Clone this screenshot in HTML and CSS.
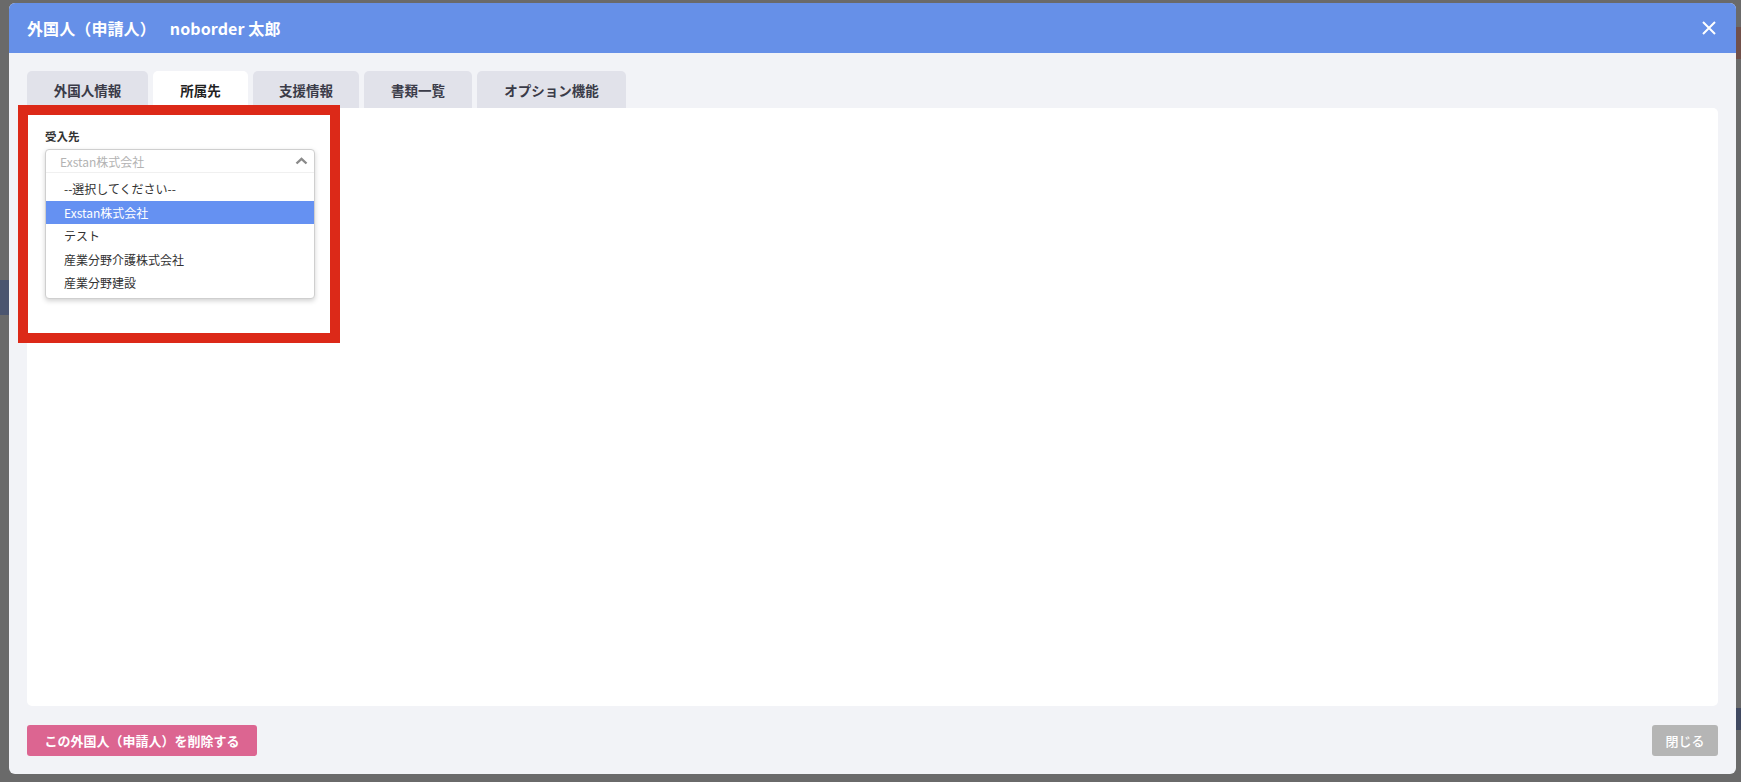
FILE: index.html
```html
<!DOCTYPE html>
<html lang="ja">
<head>
    <meta charset="UTF-8">
    <meta name="viewport" content="width=device-width, initial-scale=1.0">
    <title>外国人（申請人）</title>
    <link rel="stylesheet" href="styles.css">
</head>
<body>
    <div class="backdrop">
        <div class="side-mark side-left"></div>
        <div class="side-mark side-right-top"></div>
        <div class="side-mark side-right-bottom"></div>
    </div>

    <div class="modal">
        <div class="modal-header">
            <h2 class="modal-title">外国人（申請人）<span class="name">noborder 太郎</span></h2>
            <button class="close-x" aria-label="close">
                <svg width="14" height="14" viewBox="0 0 14 14">
                    <path d="M1 1 L13 13 M13 1 L1 13" stroke="#fff" stroke-width="2" fill="none"/>
                </svg>
            </button>
        </div>

        <div class="modal-body">
            <div class="tabs">
                <div class="tab">外国人情報</div>
                <div class="tab active">所属先</div>
                <div class="tab">支援情報</div>
                <div class="tab">書類一覧</div>
                <div class="tab">オプション機能</div>
            </div>

            <div class="panel">
                <label class="field-label">受入先</label>
                <div class="select open">
                    <div class="select-box">
                        <span class="select-value">Exstan株式会社</span>
                        <svg class="chevron" width="13" height="8" viewBox="0 0 13 8">
                            <path d="M1.5 6.5 L6.5 1.8 L11.5 6.5" stroke="#8a8a8a" stroke-width="2.4" fill="none"/>
                        </svg>
                    </div>
                    <ul class="options">
                        <li>--選択してください--</li>
                        <li class="selected">Exstan株式会社</li>
                        <li>テスト</li>
                        <li>産業分野介護株式会社</li>
                        <li>産業分野建設</li>
                    </ul>
                </div>
            </div>

            <div class="modal-footer">
                <button class="btn btn-delete">この外国人（申請人）を削除する</button>
                <button class="btn btn-close">閉じる</button>
            </div>
        </div>

        <div class="highlight-box"></div>
    </div>
</body>
</html>
```

FILE: styles.css
```css
* {
    box-sizing: border-box;
}

body {
    margin: 0;
    height: 782px;
    overflow: hidden;
    background-color: #6a6a6a;
    font-family: "Noto Sans CJK JP", "Noto Sans", sans-serif;
    color: #333;
}

.backdrop {
    position: absolute;
    inset: 0;
}

.side-mark {
    position: absolute;
}

.side-left {
    left: 0;
    top: 280px;
    width: 9px;
    height: 35px;
    background-color: #4b556f;
}

.side-right-top {
    right: 0;
    top: 27px;
    width: 5px;
    height: 32px;
    background-color: #71504a;
}

.side-right-bottom {
    right: 0;
    top: 708px;
    width: 5px;
    height: 22px;
    background-color: #3f4860;
}

.modal {
    position: relative;
    margin: 3px 0 0 9px;
    width: 1727px;
    height: 771px;
    background-color: #f2f3f7;
    border-radius: 6px;
    display: flex;
    flex-direction: column;
}

.modal-header {
    height: 50px;
    flex-shrink: 0;
    background-color: #6690e8;
    border-radius: 6px 6px 0 0;
    display: flex;
    align-items: center;
    justify-content: space-between;
    padding: 0 17px 0 18px;
}

.modal-title {
    margin: 0;
    color: #fff;
    font-size: 16px;
    font-weight: 700;
    letter-spacing: 0.1px;
}

.modal-title .name {
    margin-left: 14px;
}

.close-x {
    background: none;
    border: none;
    padding: 0;
    width: 20px;
    height: 20px;
    display: flex;
    align-items: center;
    justify-content: center;
    cursor: pointer;
}

.modal-body {
    flex: 1;
    display: flex;
    flex-direction: column;
    padding: 18px;
}

.tabs {
    display: flex;
    gap: 5px;
    height: 37px;
}

.tab {
    background-color: #e1e2ea;
    border-radius: 5px 5px 0 0;
    font-size: 13.5px;
    font-weight: 700;
    color: #3a3b48;
    display: flex;
    align-items: center;
    justify-content: center;
}

.tab:nth-child(1) {
    width: 121px;
}

.tab:nth-child(2) {
    width: 95px;
}

.tab:nth-child(3) {
    width: 106px;
}

.tab:nth-child(4) {
    width: 108px;
}

.tab:nth-child(5) {
    width: 149px;
}

.tab.active {
    background-color: #fff;
    color: #222;
}

.panel {
    background-color: #fff;
    border-radius: 0 5px 5px 5px;
    height: 598px;
    padding: 20px 18px;
}

.field-label {
    display: block;
    font-size: 11.5px;
    font-weight: 700;
    color: #333;
    line-height: 16px;
    margin-bottom: 5px;
}

.select {
    width: 270px;
    border: 1px solid #cfcfcf;
    border-radius: 4px;
    box-shadow: 0 2px 5px rgba(0, 0, 0, 0.18);
    background-color: #fff;
}

.select-box {
    height: 23px;
    display: flex;
    align-items: center;
    justify-content: space-between;
    padding: 0 6px 0 14px;
    border-bottom: 1px solid #f0f0f0;
}

.select-value {
    font-size: 12px;
    color: #b3b3b3;
}

.options {
    list-style: none;
    margin: 0;
    padding: 4px 0 3px;
}

.options li {
    height: 23.5px;
    line-height: 23.5px;
    padding-left: 18px;
    font-size: 12px;
    color: #333;
}

.options li.selected {
    background-color: #6591f2;
    color: #fff;
}

.modal-footer {
    margin-top: 19px;
    display: flex;
    justify-content: space-between;
}

.btn {
    height: 31px;
    border: none;
    border-radius: 3px;
    font-family: inherit;
    font-size: 13px;
    font-weight: 700;
    color: #fff;
    cursor: pointer;
}

.btn-delete {
    width: 230px;
    background-color: #dc6591;
}

.btn-close {
    width: 66px;
    background-color: #b5b5b5;
    font-weight: 500;
}

.highlight-box {
    position: absolute;
    left: 9px;
    top: 102px;
    width: 322px;
    height: 238px;
    border: 10px solid #dc2918;
    pointer-events: none;
}
```
